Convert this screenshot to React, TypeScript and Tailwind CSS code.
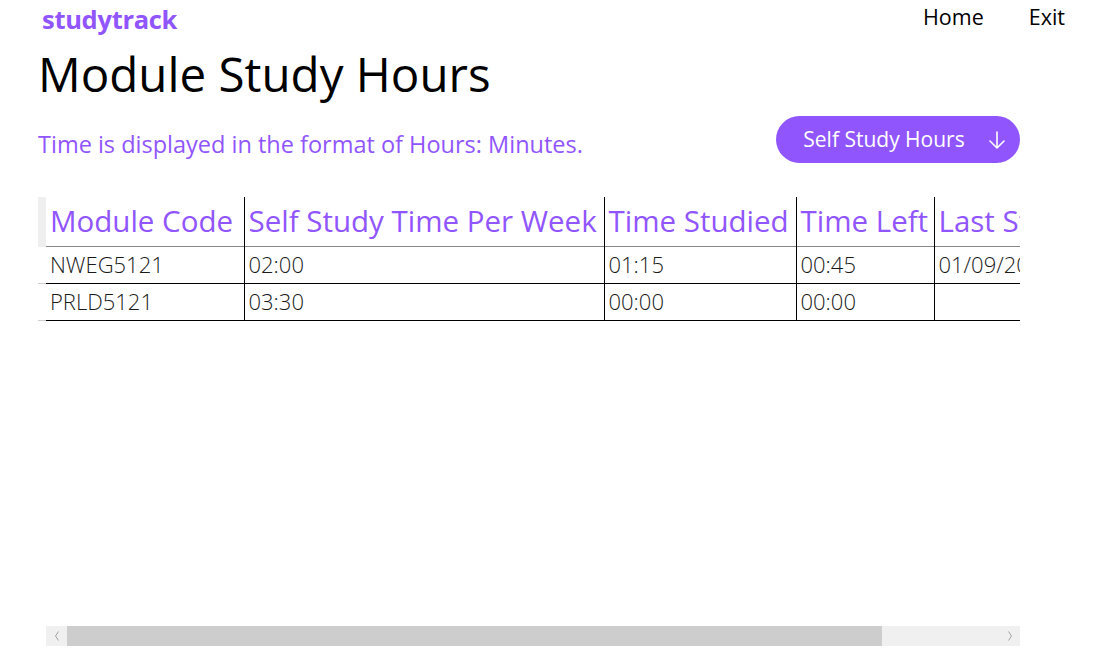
import React from "react";

const rows = [
  { code: "NWEG5121", perWeek: "02:00", studied: "01:15", left: "00:45", last: "01/09/2023" },
  { code: "PRLD5121", perWeek: "03:30", studied: "00:00", left: "00:00", last: "" },
];

export default function App() {
  return (
    <div className="min-h-screen w-full bg-white font-['Open_Sans',sans-serif] text-black">
      {/* Top bar */}
      <header className="flex items-start justify-between pl-[42px] pr-[42px] pt-[2px]">
        <span className="text-[25.5px] font-bold leading-[34px] text-[#9155fd] tracking-[-0.3px]">studytrack</span>
        <nav className="flex gap-[45px] text-[21.5px] leading-[30px]">
          <a href="#">Home</a>
          <a href="#">Exit</a>
        </nav>
      </header>

      <main className="w-[982px] ml-[38px]">
        <h1 className="mt-[10px] text-[47.5px] leading-[56px] font-normal">Module Study Hours</h1>

        <div className="mt-[14px] flex items-center justify-between">
          <p className="text-[23.5px] leading-[32px] text-[#9155fd] pt-[8px]">Time is displayed in the format of Hours: Minutes.</p>
          <button className="flex h-[47px] w-[244px] items-center justify-center gap-[23px] rounded-full bg-[#9155fd] pl-[13px] text-[21px] text-white">
            <span>Self Study Hours</span>
            <svg width="18" height="20" viewBox="0 0 18 20" fill="none" stroke="white" strokeWidth="1.6" strokeLinecap="round" strokeLinejoin="round">
              <path d="M9 2v16M2 11l7 7 7-7" />
            </svg>
          </button>
        </div>

        {/* Table area */}
        <div className="mt-[34px] h-[449px] flex flex-col">
          <div className="overflow-hidden">
            <table className="w-[1096px] table-fixed border-collapse whitespace-nowrap">
              <colgroup>
                <col className="w-[8px]" />
                <col className="w-[198px]" />
                <col className="w-[360px]" />
                <col className="w-[192px]" />
                <col className="w-[138px]" />
                <col className="w-[200px]" />
              </colgroup>
              <thead>
                <tr className="h-[49px] border-b border-[#888]">
                  <th className="bg-[#efefef] p-0 border-b border-[#efefef]"></th>
                  <th className="overflow-hidden px-[4px] text-left text-[29.5px] font-normal text-[#9155fd] border-r border-black">Module Code</th>
                  <th className="overflow-hidden px-[4px] text-left text-[29.5px] font-normal text-[#9155fd] border-r border-black">Self Study Time Per Week</th>
                  <th className="overflow-hidden px-[4px] text-left text-[29.5px] font-normal text-[#9155fd] border-r border-black">Time Studied</th>
                  <th className="overflow-hidden px-[4px] text-left text-[29.5px] font-normal text-[#9155fd] border-r border-black">Time Left</th>
                  <th className="overflow-hidden px-[4px] text-left text-[29.5px] font-normal text-[#9155fd]">Last Studied</th>
                </tr>
              </thead>
              <tbody>
                {rows.map((r) => (
                  <tr key={r.code} className="h-[37px] border-b border-black text-[22px] font-light text-[#1a1a1a]">
                    <td className="p-0 border-b border-[#ccc] bg-white"></td>
                    <td className="px-[4px] border-r border-black">{r.code}</td>
                    <td className="px-[4px] border-r border-black">{r.perWeek}</td>
                    <td className="px-[4px] border-r border-black">{r.studied}</td>
                    <td className="px-[4px] border-r border-black">{r.left}</td>
                    <td className="px-[4px]">{r.last}</td>
                  </tr>
                ))}
              </tbody>
            </table>
          </div>

          {/* Scrollbar */}
          <div className="mt-auto ml-[8px] flex h-[20px] items-stretch bg-[#f0f0f0]">
            <div className="flex w-[21px] items-center justify-center">
              <svg width="8" height="12" viewBox="0 0 8 12" fill="none" stroke="#a3a3a3" strokeWidth="1">
                <path d="M5.5 1.5 2.5 6l3 4.5" />
              </svg>
            </div>
            <div className="w-[815px] bg-[#cdcdcd]"></div>
            <div className="flex-1"></div>
            <div className="flex w-[21px] items-center justify-center">
              <svg width="8" height="12" viewBox="0 0 8 12" fill="none" stroke="#a3a3a3" strokeWidth="1">
                <path d="M2.5 1.5 5.5 6l-3 4.5" />
              </svg>
            </div>
          </div>
        </div>
      </main>
    </div>
  );
}
